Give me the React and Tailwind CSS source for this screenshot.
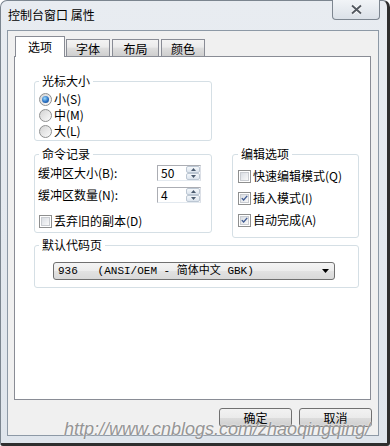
import React from "react";

// Win7 style radio
const Radio = ({ checked, label }) => (
  <div className="flex items-center h-[16px] ml-[1px]">
    <span className="flex items-center justify-center w-[13px] h-[13px] rounded-full border border-[#8e8f8f] bg-[linear-gradient(135deg,#d3d3d3,#fbfbfb)]">
      {checked && <span className="w-[7px] h-[7px] rounded-full bg-[radial-gradient(circle_at_40%_35%,#9bdcff,#2a70c2_55%,#0f3f86)]" />}
    </span>
    <span className="ml-[2px]">{label}</span>
  </div>
);

// Win7 style checkbox
const Check = ({ checked, label }) => (
  <div className="flex items-center h-[16px] ml-[1px]">
    <span className="flex items-center justify-center w-[13px] h-[13px] border border-[#8e8f8f] bg-white p-[1px]">
      <span className="flex items-center justify-center w-full h-full border border-[#c9ccd1] bg-[linear-gradient(135deg,#d9dde3,#f9f9f9)]">
        {checked && (
          <svg width="9" height="8" viewBox="0 0 9 8">
            <path d="M1 4.2 L3.4 6.6 L8 1.2" fill="none" stroke="#3e5a92" strokeWidth="1.7" />
          </svg>
        )}
      </span>
    </span>
    <span className="ml-[2px]">{label}</span>
  </div>
);

const Spin = ({ value }) => (
  <div className="flex w-[44px] h-[16px] border border-[#abadb3] border-b-[#e3e9ef] border-r-[#dbdfe6] bg-white">
    <span className="flex-1 pl-[3px] leading-[14px]">{value}</span>
    <div className="flex flex-col w-[14px]">
      <span className="flex flex-1 items-center justify-center border border-[#bcc7d3] rounded-[2px] bg-[linear-gradient(#f5f8fb,#dce4ed)]">
        <svg width="5" height="3" viewBox="0 0 5 3"><path d="M0 3 L2.5 0 L5 3Z" fill="#4a5a6e" /></svg>
      </span>
      <span className="flex flex-1 items-center justify-center border border-[#bcc7d3] rounded-[2px] bg-[linear-gradient(#f5f8fb,#dce4ed)]">
        <svg width="5" height="3" viewBox="0 0 5 3"><path d="M0 0 L5 0 L2.5 3Z" fill="#4a5a6e" /></svg>
      </span>
    </div>
  </div>
);

const Button = ({ children }) => (
  <button className="w-[73px] h-[19px] border border-[#707070] rounded-[3px] bg-[linear-gradient(#f2f2f2,#ebebeb_50%,#dddddd_50%,#cfcfcf)] leading-[17px] text-center">
    {children}
  </button>
);

const App = () => {
  return (
    <div className="relative w-[390px] h-[446px] overflow-hidden bg-white font-['Noto_Sans_CJK_SC','Noto_Sans',sans-serif] text-[12px] leading-[14px] text-black">
      <div className="flex flex-col w-[390px] h-[446px] rounded-t-[7px] rounded-b-[3px] border-l border-t border-[#7b858f] border-r-[3px] border-b-[3px] border-r-[#2e2e2e] border-b-[#2e2e2e] bg-[linear-gradient(#e8ecf1,#dfe5ec)]">
        {/* Title bar */}
        <div className="flex justify-between h-[29px]">
          <span className="pl-[7px] pt-[7px] text-[12px]">控制台窗口 属性</span>
          <div className="flex items-center justify-center -mt-px mr-[7px] w-[48px] h-[20px] border border-t-0 border-[#7d8690] rounded-b-[4px] bg-[linear-gradient(#f1f4f7,#dbe1e8)]">
            <svg width="13" height="11" viewBox="0 0 13 11">
              <path d="M2 1.5 L11 9.5 M11 1.5 L2 9.5" stroke="#ffffff" strokeWidth="3.6" />
              <path d="M2 1.5 L11 9.5 M11 1.5 L2 9.5" stroke="#545a62" strokeWidth="2" />
            </svg>
          </div>
        </div>

        {/* Client area */}
        <div className="flex flex-col ml-[6px] w-[372px] h-[406px] border border-[#8d99a6] bg-[#f0f0f0] pt-[5px] px-[6px]">
          {/* Tabs */}
          <div className="flex items-end h-[20px] pl-[1px]">
            <div className="relative z-10 -mb-px w-[50px] h-[21px] border border-b-0 border-[#898c95] bg-white text-center pt-[3px]">选项</div>
            <div className="ml-[1px] w-[44px] h-[17px] border border-b-0 border-[#898c95] bg-[linear-gradient(#f3f3f3,#ebebeb_45%,#dedede_50%,#cfcfcf)] text-center pt-[2px]">字体</div>
            <div className="ml-[2px] w-[47px] h-[17px] border border-b-0 border-[#898c95] bg-[linear-gradient(#f3f3f3,#ebebeb_45%,#dedede_50%,#cfcfcf)] text-center pt-[2px]">布局</div>
            <div className="ml-[2px] w-[44px] h-[17px] border border-b-0 border-[#898c95] bg-[linear-gradient(#f3f3f3,#ebebeb_45%,#dedede_50%,#cfcfcf)] text-center pt-[2px]">颜色</div>
          </div>

          {/* Tab panel */}
          <div className="flex flex-col w-[357px] h-[344px] border border-[#898c95] bg-white">
            {/* 光标大小 */}
            <fieldset className="ml-[19px] mt-[17px] w-[178px] border border-[#d5dfe5] rounded-[3px] pl-[3px] pt-[3px] pb-[1px]">
              <legend className="ml-[1px] px-[3px] leading-[14px]">光标大小</legend>
              <Radio checked label="小(S)" />
              <Radio label="中(M)" />
              <Radio label="大(L)" />
            </fieldset>

            <div className="flex items-start ml-[19px] mt-[6px] gap-[20px]">
              {/* 命令记录 */}
              <fieldset className="w-[178px] border border-[#d5dfe5] rounded-[3px] pl-[3px] pt-[4px] pb-[3px]">
                <legend className="ml-[1px] px-[3px] leading-[14px]">命令记录</legend>
                <div className="flex items-center h-[16px]">
                  <span className="w-[119px]">缓冲区大小(B):</span>
                  <Spin value="50" />
                </div>
                <div className="flex items-center h-[16px] mt-[6px]">
                  <span className="w-[119px]">缓冲区数量(N):</span>
                  <Spin value="4" />
                </div>
                <div className="mt-[10px]">
                  <Check label="丢弃旧的副本(D)" />
                </div>
              </fieldset>

              {/* 编辑选项 */}
              <fieldset className="w-[127px] border border-[#d5dfe5] rounded-[3px] pl-[4px] pt-[7px] pb-[9px]">
                <legend className="ml-[1px] px-[3px] leading-[14px]">编辑选项</legend>
                <div className="flex flex-col gap-[6px]">
                  <Check label="快速编辑模式(Q)" />
                  <Check checked label="插入模式(I)" />
                  <Check checked label="自动完成(A)" />
                </div>
              </fieldset>
            </div>

            {/* 默认代码页 */}
            <fieldset className="ml-[19px] w-[325px] border border-[#d5dfe5] rounded-[3px] pl-[3px] pb-[7px]">
              <legend className="ml-[1px] px-[3px] leading-[14px]">默认代码页</legend>
              <div className="flex items-center ml-[15px] mt-[10px] w-[282px] h-[18px] border border-[#707070] rounded-[3px] bg-[linear-gradient(#f4f4f4,#ececec_50%,#e2e2e2_50%,#d9d9d9)] pl-[4px] pr-[5px]">
                <span className="flex-1 whitespace-pre font-['Liberation_Mono','Noto_Sans_CJK_SC',monospace] text-[11px]">936   (ANSI/OEM - 简体中文 GBK)</span>
                <svg width="7" height="4" viewBox="0 0 7 4"><path d="M0 0 L7 0 L3.5 4Z" fill="#000" /></svg>
              </div>
            </fieldset>
          </div>

          {/* Buttons */}
          <div className="flex justify-end gap-[7px] mt-[8px]">
            <Button>确定</Button>
            <Button>取消</Button>
          </div>
        </div>
      </div>

      {/* Watermark */}
      <span className="absolute left-[64px] top-[419px] font-['Liberation_Sans',sans-serif] italic text-[18px] leading-[21px] text-[#959595] [text-shadow:0_0_2px_#ffffff]">
        http://www.cnblogs.com/zhaoqingqing/
      </span>
    </div>
  );
};

export default App;
